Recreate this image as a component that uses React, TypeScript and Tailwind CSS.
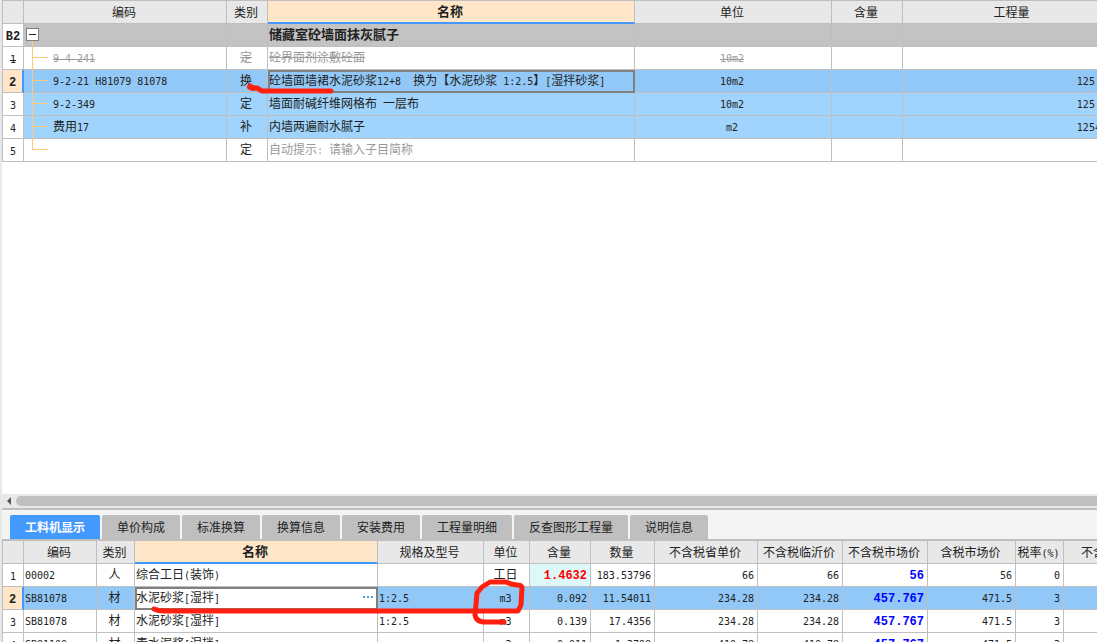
import { type ReactNode } from 'react';
import clsx from 'clsx';

interface QuotaRow {
  no: string;
  code: string;
  kind: string;
  name: string;
  unit: string;
  amount: string;
  state: 'deleted' | 'current' | 'selected' | 'empty';
}

interface ResourceRow {
  code: string;
  kind: string;
  name: string;
  spec: string;
  unit: string;
  prices: string[];
}

const quotaRows: QuotaRow[] = [
  { no: '1', code: '9-4-241', kind: '定', name: '砼界面剂涂敷砼面', unit: '10m2', amount: '', state: 'deleted' },
  {
    no: '2',
    code: '9-2-21 H81079 81078',
    kind: '换',
    name: '砼墙面墙裙水泥砂浆12+8  换为【水泥砂浆 1:2.5】[湿拌砂浆]',
    unit: '10m2',
    amount: '125.436',
    state: 'current',
  },
  { no: '3', code: '9-2-349', kind: '定', name: '墙面耐碱纤维网格布 一层布', unit: '10m2', amount: '125.436', state: 'selected' },
  { no: '4', code: '费用17', kind: '补', name: '内墙两遍耐水腻子', unit: 'm2', amount: '1254.36', state: 'selected' },
  { no: '5', code: '', kind: '定', name: '自动提示: 请输入子目简称', unit: '', amount: '', state: 'empty' },
];

// prices: 含量, 数量, 省单价, 临沂价, 不含税市场价, 含税市场价, 税率
const resourceRows: ResourceRow[] = [
  { code: '00002', kind: '人', name: '综合工日(装饰)', spec: '', unit: '工日', prices: ['1.4632', '183.53796', '66', '66', '56', '56', '0'] },
  { code: 'SB81078', kind: '材', name: '水泥砂浆[湿拌]', spec: '1:2.5', unit: 'm3', prices: ['0.092', '11.54011', '234.28', '234.28', '457.767', '471.5', '3'] },
  { code: 'SB81078', kind: '材', name: '水泥砂浆[湿拌]', spec: '1:2.5', unit: 'm3', prices: ['0.139', '17.4356', '234.28', '234.28', '457.767', '471.5', '3'] },
  { code: 'SB81100', kind: '材', name: '素水泥浆[湿拌]', spec: '', unit: 'm3', prices: ['0.011', '1.3798', '410.78', '410.78', '457.767', '471.5', '3'] },
];

const tabs = ['工料机显示', '单价构成', '标准换算', '换算信息', '安装费用', '工程量明细', '反查图形工程量', '说明信息'];

const box = 'h-[23px] border-r border-b border-[#bfbfbf] overflow-hidden whitespace-pre';
const cell = clsx(box, 'pt-0 pr-[3px] pb-[3px] pl-px');
const cellCenter = clsx(box, 'pt-0 pr-0.5 pb-[3px] pl-0 text-center');
const head = clsx(box, 'py-0 pr-0.5 pl-0 bg-[#e8e8e8] font-normal text-center');
const headActive =
  'h-[23px] border-r border-b-2 border-r-[#bfbfbf] border-b-[#4499ff] pt-0 pr-0.5 pb-0.5 pl-0 bg-[#ffe6c8] text-center text-[13px] font-bold';

// Latin runs are half the width of a Chinese character
function Mixed({ text, struck }: { text: string; struck?: boolean }) {
  return (
    <>
      {text.split(/([\x20-\x7e]+)/).map(
        (part, i) =>
          part && (
            <span
              key={i}
              className={clsx(
                i % 2 === 1 && "font-['DejaVu_Sans_Mono',monospace] text-[10px] leading-none",
                struck && 'line-through',
              )}
            >
              {part}
            </span>
          ),
      )}
    </>
  );
}

function BoldNum({ children }: { children: ReactNode }) {
  return <span className="font-['Liberation_Mono',monospace] text-xs leading-none font-bold">{children}</span>;
}

function RowNo({ no, active, struck }: { no: string; active?: boolean; struck?: boolean }) {
  return (
    <td
      className={clsx(
        'h-[23px] border-b border-l border-[#bfbfbf] px-0 pt-0 pb-px text-center',
        active ? 'border-r-2 border-r-[#4499ff] bg-[#ffe6c8]' : 'border-r bg-white',
      )}
    >
      {active || no === 'B2' ? <BoldNum>{no}</BoldNum> : <Mixed text={no} struck={struck} />}
    </td>
  );
}

function TreeBranch({ last }: { last?: boolean }) {
  return (
    <span className="relative h-[22px] w-4 shrink-0">
      <span className={clsx('absolute -top-px left-0 w-px bg-[#ffc878]', last ? 'h-3' : 'h-6')} />
      <span className="absolute top-2.5 left-0 h-px w-4 bg-[#ffc878]" />
    </span>
  );
}

function QuotaTable() {
  return (
    <table className="w-[1121px] table-fixed border-separate border-spacing-0 border-t border-[#bfbfbf]">
      <colgroup>
        <col className="w-[22px]" />
        <col className="w-[203px]" />
        <col className="w-[41px]" />
        <col className="w-[367px]" />
        <col className="w-[197px]" />
        <col className="w-[71px]" />
        <col className="w-[220px]" />
      </colgroup>
      <thead>
        <tr>
          <th className={clsx(head, 'border-l')} />
          <th className={head}>编码</th>
          <th className={head}>类别</th>
          <th className={headActive}>名称</th>
          <th className={head}>单位</th>
          <th className={head}>含量</th>
          <th className={head}>工程量</th>
        </tr>
      </thead>
      <tbody>
        <tr className="bg-[#c3c3c3]">
          <RowNo no="B2" />
          <td className={clsx(box, 'py-0 pr-0 pl-0.5')}>
            <button aria-label="折叠" className="block">
              <svg width="13" height="22" viewBox="0 0 13 22" shapeRendering="crispEdges">
                <path d="M6.5 17v5" stroke="#ffc878" />
                <path d="M.5 4.5h12v12H.5z" fill="#fff" stroke="#808080" />
                <path d="M3 10.5h7" stroke="#222" />
              </svg>
            </button>
          </td>
          <td className={cell} />
          <td className={clsx(cell, 'text-[13px] font-bold')}>储藏室砼墙面抹灰腻子</td>
          <td className={cell} />
          <td className={cell} />
          <td className={cell} />
        </tr>
        {quotaRows.map((row) => {
          const struck = row.state === 'deleted';
          return (
            <tr
              key={row.no}
              className={clsx(
                row.state === 'current' && 'bg-[#91c8f7]',
                row.state === 'selected' && 'bg-[#a0d4fc]',
                (struck || row.state === 'empty') && 'bg-white',
              )}
            >
              <RowNo no={row.no} active={row.state === 'current'} struck={struck} />
              <td className="h-[23px] border-r border-b border-[#bfbfbf] p-0 whitespace-pre">
                <div className="flex h-[22px] items-center gap-[5px] pl-2">
                  <TreeBranch last={row.state === 'empty'} />
                  <span className={clsx('pb-[3px]', struck && 'text-[#999]')}>
                    <Mixed text={row.code} struck={struck} />
                  </span>
                </div>
              </td>
              <td className={clsx(cellCenter, struck && 'text-[#999]')}>
                <Mixed text={row.kind} struck={struck} />
              </td>
              <td
                className={clsx(
                  cell,
                  (struck || row.state === 'empty') && 'text-[#999]',
                  row.state === 'current' && 'outline-2 -outline-offset-2 outline-[#808080]',
                )}
              >
                <Mixed text={row.name} struck={struck} />
              </td>
              <td className={clsx(cellCenter, struck && 'text-[#999]')}>
                <Mixed text={row.unit} struck={struck} />
              </td>
              <td className={cell} />
              <td className={clsx(cell, 'text-right')}>
                <Mixed text={row.amount} />
              </td>
            </tr>
          );
        })}
      </tbody>
    </table>
  );
}

function ResourceTable() {
  return (
    <table className="w-[1171px] table-fixed border-separate border-spacing-0">
      <colgroup>
        <col className="w-[22px]" />
        <col className="w-[73px]" />
        <col className="w-[38px]" />
        <col className="w-[243px]" />
        <col className="w-[106px]" />
        <col className="w-[46px]" />
        <col className="w-[61px]" />
        <col className="w-[64px]" />
        <col className="w-[103px]" />
        <col className="w-[85px]" />
        <col className="w-[85px]" />
        <col className="w-[88px]" />
        <col className="w-[48px]" />
        <col className="w-[109px]" />
      </colgroup>
      <thead>
        <tr>
          <th className={clsx(head, 'border-l')} />
          <th className={head}>编码</th>
          <th className={head}>类别</th>
          <th className={headActive}>名称</th>
          {['规格及型号', '单位', '含量', '数量', '不含税省单价', '不含税临沂价', '不含税市场价', '含税市场价', '税率(%)', '不含税省合价'].map((title) => (
            <th key={title} className={head}>
              <Mixed text={title} />
            </th>
          ))}
        </tr>
      </thead>
      <tbody>
        {resourceRows.map((row, i) => {
          const active = i === 1;
          return (
            <tr key={i} className={active ? 'bg-[#91c8f7]' : 'bg-white'}>
              <RowNo no={String(i + 1)} active={active} />
              <td className={cell}>
                <Mixed text={row.code} />
              </td>
              <td className={cellCenter}>{row.kind}</td>
              <td className={clsx(cell, active && 'bg-white outline-2 -outline-offset-2 outline-[#808080]')}>
                <div className="flex items-center justify-between">
                  <span>
                    <Mixed text={row.name} />
                  </span>
                  {active && (
                    <button aria-label="更多" className="flex gap-0.5 pr-px">
                      <span className="size-0.5 bg-[#4a9ad4]" />
                      <span className="size-0.5 bg-[#4a9ad4]" />
                      <span className="size-0.5 bg-[#4a9ad4]" />
                    </button>
                  )}
                </div>
              </td>
              <td className={cell}>
                <Mixed text={row.spec} />
              </td>
              <td className={cellCenter}>
                <Mixed text={row.unit} />
              </td>
              {row.prices.map((value, col) => {
                const red = i === 0 && col === 0;
                return (
                  <td
                    key={col}
                    className={clsx(cell, 'text-right', red && 'bg-[#dcf8f8] text-[#ff0000]', col === 4 && 'text-[#0000ff]')}
                  >
                    {red || col === 4 ? <BoldNum>{value}</BoldNum> : <Mixed text={value} />}
                  </td>
                );
              })}
              <td className={cell} />
            </tr>
          );
        })}
      </tbody>
    </table>
  );
}

export default function App() {
  return (
    <div className="relative flex h-screen flex-col overflow-hidden bg-[#e8e8e8] pl-0.5 font-['Noto_Sans_CJK_SC',sans-serif] text-xs leading-4 text-[#222]">
      <main className="min-h-0 flex-1 overflow-hidden bg-white">
        <QuotaTable />
      </main>

      <div className="flex h-3.5 shrink-0 items-center gap-1 overflow-hidden pl-1">
        <svg width="6" height="8" viewBox="0 0 6 8">
          <path d="M5 0v8L1 4z" fill="#555" />
        </svg>
        <div className="h-2.5 flex-1 rounded-l-full bg-[#bfbfbf]" />
      </div>

      <section className="h-[134px] shrink-0 overflow-hidden border-t-2 border-[#bfbfbf] bg-[#f4f4f4]">
        <div role="tablist" className="flex h-[31px] gap-0.5 border-b-2 border-[#bfbfbf] pt-[5px] pl-2">
          {tabs.map((tab, i) => (
            <button
              key={tab}
              role="tab"
              aria-selected={i === 0}
              className={clsx(
                'shrink-0 rounded-t-xs px-[15px] whitespace-nowrap',
                i === 0 ? 'bg-[#4499ff] font-bold text-white' : 'bg-[#bfbfbf]',
              )}
            >
              {tab}
            </button>
          ))}
        </div>
        <ResourceTable />
      </section>

      {/* red pen marks */}
      <svg
        className="pointer-events-none absolute top-0 left-0"
        width="540"
        height="642"
        viewBox="0 0 540 642"
        fill="none"
        stroke="#ff2010"
        strokeWidth="5"
        strokeLinecap="round"
        strokeLinejoin="round"
      >
        <path d="M250 86l2 2 5 0 5 3h69" />
        <path d="M250 87l3 1" strokeWidth="6" />
        <path d="M154 609q4 2 10 2H518l3-6 1-18q-1-2-5-2l-6-1-5-2h-16l-8 5-5 6-1 12-1 10q1 6 8 7h21" />
      </svg>
    </div>
  );
}
